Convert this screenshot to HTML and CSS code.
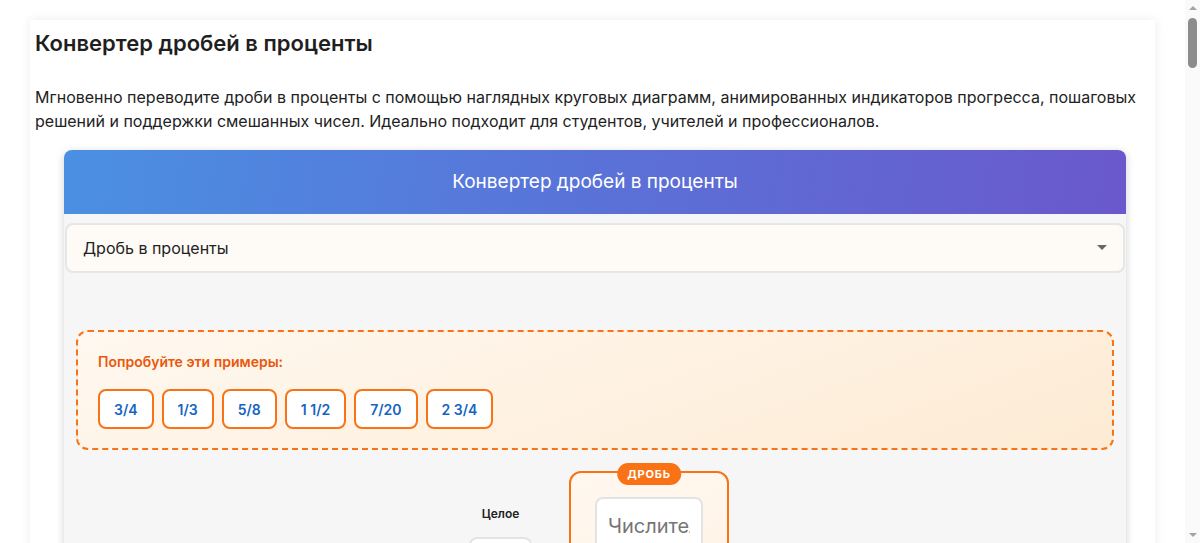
FILE: index.html
```html
<!DOCTYPE html>
<html lang="ru">
<head>
    <meta charset="UTF-8">
    <title>Конвертер дробей в проценты</title>
    <link rel="stylesheet" href="styles.css">
</head>
<body>

<div class="viewport">
<div class="page">
    <h1 class="page-title">Конвертер дробей в проценты</h1>
    <p class="page-intro">Мгновенно переводите дроби в проценты с помощью наглядных круговых диаграмм, анимированных индикаторов прогресса, пошаговых решений и поддержки смешанных чисел. Идеально подходит для студентов, учителей и профессионалов.</p>

    <div class="tool">
        <div class="tool-header">Конвертер дробей в проценты</div>
        <div class="tool-body">
            <div class="mode-wrap">
                <select class="mode-select">
                    <option>Дробь в проценты</option>
                    <option>Проценты в дробь</option>
                </select>
            </div>

            <div class="tool-content">
                <div class="examples">
                    <div class="examples-label">Попробуйте эти примеры:</div>
                    <div class="examples-list">
                        <button class="example-btn">3/4</button>
                        <button class="example-btn">1/3</button>
                        <button class="example-btn">5/8</button>
                        <button class="example-btn">1 1/2</button>
                        <button class="example-btn">7/20</button>
                        <button class="example-btn">2 3/4</button>
                    </div>
                </div>

                <div class="fraction-row">
                    <div class="whole-col">
                        <label class="whole-label">Целое</label>
                        <input class="whole-input" type="text">
                    </div>
                    <div class="fraction-box">
                        <span class="fraction-badge">Дробь</span>
                        <input class="frac-input" type="text" placeholder="Числитель">
                        <div class="frac-line"></div>
                        <input class="frac-input" type="text" placeholder="Знаменатель">
                    </div>
                </div>

                <div class="actions">
                    <button class="convert-btn">Преобразовать</button>
                    <button class="reset-btn">Сбросить</button>
                </div>

                <div class="result">
                    <div class="result-title">Результат</div>
                    <div class="result-value">—</div>
                    <div class="progress"><div class="progress-bar"></div></div>
                </div>
            </div>
        </div>
    </div>

    <div class="article">
        <h2>Как перевести дробь в проценты</h2>
        <p>Чтобы перевести дробь в проценты, разделите числитель на знаменатель и умножьте результат на 100. Например, 3/4 = 0,75 × 100 = 75%.</p>
        <h2>Смешанные числа</h2>
        <p>Для смешанного числа сначала переведите его в неправильную дробь: 2 3/4 = 11/4 = 2,75 = 275%.</p>
    </div>
</div>
</div>

<div class="scrollbar">
    <span class="scroll-up"></span>
    <span class="scroll-thumb"></span>
    <span class="scroll-down"></span>
</div>

</body>
</html>
```

FILE: styles.css
```css
html, body {
    height: 100%;
}

body {
    display: flex;
    margin: 0;
    overflow: hidden;
    background-color: #fff;
    font-family: Inter, "Noto Sans", sans-serif;
    color: #222;
}

/* page area, clipped at the window bottom */
.viewport {
    flex: 1;
    min-width: 0;
    overflow: hidden;
}

/* drawn scrollbar on the right */
.scrollbar {
    display: flex;
    flex-direction: column;
    align-items: center;
    width: 15px;
    flex-shrink: 0;
    padding: 6px 0;
    box-sizing: border-box;
    background: #fafafa;
}
.scroll-up {
    border-left: 4px solid transparent;
    border-right: 4px solid transparent;
    border-bottom: 4px solid #a3a3a3;
}
.scroll-thumb {
    width: 9px;
    height: 50px;
    margin-top: 8px;
    border-radius: 5px;
    background: #8c8c8c;
}
.scroll-down {
    margin-top: auto;
    border-left: 4px solid transparent;
    border-right: 4px solid transparent;
    border-top: 4px solid #a3a3a3;
}

.page {
    max-width: 1115px;
    margin: 20px auto;
    padding: 10px 5px;
    background: #fff;
    box-shadow: 0 0 10px rgba(0, 0, 0, 0.08);
}

.page-title {
    margin: 0;
    font-size: 22px;
    line-height: 26px;
    font-weight: 600;
    color: #1f1f1f;
}

.page-intro {
    margin: 29px 0 17px;
    font-size: 16px;
    line-height: 24px;
}

/* converter card */
.tool {
    width: 1062px;
    margin-left: 29px;
    border-radius: 8px;
    overflow: hidden;
    background: #f6f6f6;
    box-shadow: 0 2px 8px rgba(0, 0, 0, 0.18);
}

.tool-header {
    height: 64px;
    line-height: 64px;
    text-align: center;
    font-size: 19px;
    font-weight: 400;
    color: #fff;
    background: linear-gradient(100deg, #4a90e2 0%, #5a72d8 50%, #6a58cc 100%);
}

.tool-body {
    padding: 9px 1px 30px;
}

.mode-wrap {
    position: relative;
}
.mode-wrap::after {
    content: "";
    position: absolute;
    right: 18px;
    top: 22px;
    border-left: 5px solid transparent;
    border-right: 5px solid transparent;
    border-top: 5px solid #666;
}

.mode-select {
    display: block;
    width: 100%;
    height: 50px;
    padding: 0 16px;
    -webkit-appearance: none;
    appearance: none;
    font-family: inherit;
    font-size: 16px;
    color: #222;
    background: #fefbf6;
    border: 2px solid #e6e6e6;
    border-radius: 8px;
}

.tool-content {
    padding: 57px 11px 0;
}

/* examples */
.examples {
    padding: 20px 20px 19px;
    border: 2px dashed #f97316;
    border-radius: 12px;
    background: linear-gradient(160deg, #fff8f0 0%, #fdebd4 100%);
}

.examples-label {
    font-size: 14px;
    font-weight: 600;
    line-height: 20px;
    color: #ea580c;
    margin-bottom: 17px;
}

.examples-list {
    display: flex;
    gap: 8px;
}

.example-btn {
    height: 40px;
    padding: 0 14px;
    font-family: inherit;
    font-size: 14px;
    font-weight: 600;
    color: #1565c0;
    background: #fff;
    border: 2px solid #f97316;
    border-radius: 8px;
}

/* fraction input */
.fraction-row {
    display: flex;
    justify-content: center;
    align-items: flex-start;
    gap: 37px;
    margin-top: 21px;
    padding-left: 8px;
}

.whole-col {
    display: flex;
    flex-direction: column;
    align-items: center;
    gap: 16px;
    padding-top: 35px;
}

.whole-label {
    font-size: 12px;
    font-weight: 600;
    color: #222;
}

.whole-input {
    width: 63px;
    height: 56px;
    box-sizing: border-box;
    border: 2px solid #e3e3e3;
    border-radius: 8px;
    background: #fff;
}

.fraction-box {
    position: relative;
    width: 108px;
    padding: 24px 24px;
    border: 2px solid #f97316;
    border-radius: 12px;
    background: linear-gradient(160deg, #fff8f0 0%, #fef0e0 100%);
}

.fraction-badge {
    position: absolute;
    top: -10px;
    left: 50%;
    transform: translateX(-50%);
    padding: 3px 10px;
    font-size: 11px;
    font-weight: 700;
    letter-spacing: 0.8px;
    text-transform: uppercase;
    line-height: 16px;
    color: #fff;
    background: #f97316;
    border-radius: 11px;
}

.frac-input {
    display: block;
    width: 108px;
    height: 58px;
    box-sizing: border-box;
    padding: 0 11px;
    font-family: inherit;
    font-size: 20px;
    border: 2px solid #e3e3e3;
    border-radius: 8px;
    background: #fff;
}
.frac-input::placeholder {
    color: #757575;
}

.frac-line {
    height: 3px;
    margin: 10px 0;
    background: #f97316;
}

.actions {
    display: flex;
    justify-content: center;
    gap: 12px;
    margin-top: 30px;
}

.convert-btn, .reset-btn {
    height: 44px;
    padding: 0 24px;
    font-family: inherit;
    font-size: 15px;
    font-weight: 600;
    border-radius: 8px;
    border: none;
}
.convert-btn {
    color: #fff;
    background: linear-gradient(100deg, #4a90e2, #6a58cc);
}
.reset-btn {
    color: #444;
    background: #e6e6e6;
}

.result {
    margin-top: 30px;
    padding: 20px;
    background: #fff;
    border-radius: 12px;
    text-align: center;
}
.result-title {
    font-size: 14px;
    font-weight: 600;
    color: #666;
}
.result-value {
    font-size: 40px;
    font-weight: 700;
    color: #1565c0;
    margin: 10px 0;
}
.progress {
    height: 12px;
    background: #eee;
    border-radius: 6px;
}
.progress-bar {
    width: 0;
    height: 12px;
}

/* article below */
.article {
    padding: 30px 29px;
    font-size: 16px;
    line-height: 24px;
}
.article h2 {
    font-size: 20px;
    margin: 30px 0 12px;
}
```
